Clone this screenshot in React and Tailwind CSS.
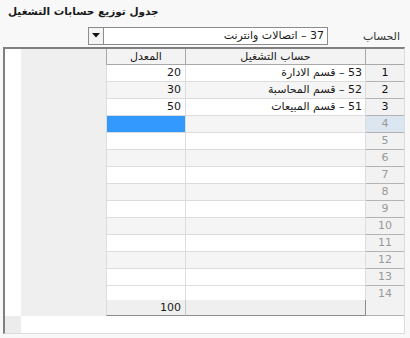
import React from "react";

const rows = [
  { n: 1, acc: "53 – قسم الادارة", rate: "20" },
  { n: 2, acc: "52 – قسم المحاسبة", rate: "30" },
  { n: 3, acc: "51 – قسم المبيعات", rate: "50" },
];

const App = () => {
  const all = Array.from({ length: 13 }, (_, i) => rows[i] || { n: i + 1 });

  return (
    <div
      className="w-[410px] h-[338px] bg-[#f8f8f8] text-[11px] text-[#1a1a1a] overflow-hidden"
      style={{ fontFamily: '"DejaVu Sans", Tahoma, sans-serif' }}
    >
      {/* title */}
      <div className="h-[24px] pt-[3px] pl-[8px] font-bold text-[10.5px] leading-[16px] whitespace-nowrap">
        <span dir="rtl">جدول توزيع حسابات التشغيل</span>
      </div>

      {/* account picker */}
      <div className="flex items-center h-[23px] pl-[88px]">
        <div className="w-[240px] h-[18px] flex border border-[#8c8c8c] bg-white">
          <div className="w-[15px] h-[16px] border-r border-[#8c8c8c] bg-[#f4f4f4] flex items-center justify-center">
            <svg width="8" height="5" viewBox="0 0 8 5">
              <path d="M0 0h8L4 4.5z" fill="#111" />
            </svg>
          </div>
          <div dir="rtl" className="flex-1 pr-[3px] leading-[16px]">
            37 – اتصالات وانترنت
          </div>
        </div>
        <div dir="rtl" className="flex-1 pr-[10px] text-[#333] leading-[16px] pt-[3px]">
          الحساب
        </div>
      </div>

      {/* grid frame */}
      <div className="ml-[3px] w-[402px] h-[287px] border-t-2 border-l-2 border-r border-b border-t-[#808080] border-l-[#808080] border-r-[#dcdcdc] border-b-[#dcdcdc] flex">
        <div className="w-[16px] flex flex-col">
          <div className="flex-1 bg-white" />
          <div className="h-[17px] bg-[#ececec]" />
        </div>
        <div className="flex-1 flex flex-col">
          <div className="h-[267px] bg-[#efefef] flex justify-end">
            <div className="grid grid-cols-[80px_180px_38px] grid-rows-[16px_repeat(13,17px)_14px_16px] self-start">
              {/* header */}
              <div className="border-l border-r border-b border-[#a8a8a8] bg-[#f3f3f3] text-center leading-[15px]">
                المعدل
              </div>
              <div className="border-r border-b border-[#a8a8a8] bg-[#f3f3f3] text-center leading-[15px]">
                حساب التشغيل
              </div>
              <div className="border-b border-[#a8a8a8] bg-[#f3f3f3]" />

              {all.map((r, i) => {
                const even = i % 2 === 1;
                const sel = r.n === 4;
                const bg = even ? "bg-[#f5f5f5]" : "bg-white";
                return (
                  <React.Fragment key={r.n}>
                    <div
                      className={`border-l border-r border-b border-[#dcdcdc] text-right pr-[4px] leading-[16px] ${
                        sel ? "bg-[#3399ff]" : bg
                      }`}
                    >
                      {r.rate}
                    </div>
                    <div
                      dir="rtl"
                      className={`border-r border-b border-[#dcdcdc] pr-[3px] leading-[16px] ${bg}`}
                    >
                      {r.acc}
                    </div>
                    <div
                      className={`border-b border-[#b4b4b4] text-center leading-[16px] ${
                        sel ? "bg-[#dbe6f1]" : "bg-[#f2f2f2]"
                      } ${r.acc ? "text-[#111]" : "text-[#999]"}`}
                    >
                      {r.n}
                    </div>
                  </React.Fragment>
                );
              })}

              {/* row 14 + footer */}
              <div className="border-l border-r border-[#dcdcdc] bg-white" />
              <div className="border-r border-[#dcdcdc] bg-white" />
              <div className="row-span-2 border-b border-[#b4b4b4] bg-[#f2f2f2] text-center text-[#999] leading-[16px]">
                14
              </div>
              <div className="border-l border-r border-b border-l-[#dcdcdc] border-r-[#c8c8c8] border-b-[#8c8c8c] bg-[#efefef] text-right pr-[4px] leading-[15px]">
                100
              </div>
              <div className="border-r border-b border-r-[#8c8c8c] border-b-[#8c8c8c] bg-[#efefef]" />
            </div>
          </div>
          <div className="flex-1 bg-white" />
        </div>
      </div>
    </div>
  );
};

export default App;
